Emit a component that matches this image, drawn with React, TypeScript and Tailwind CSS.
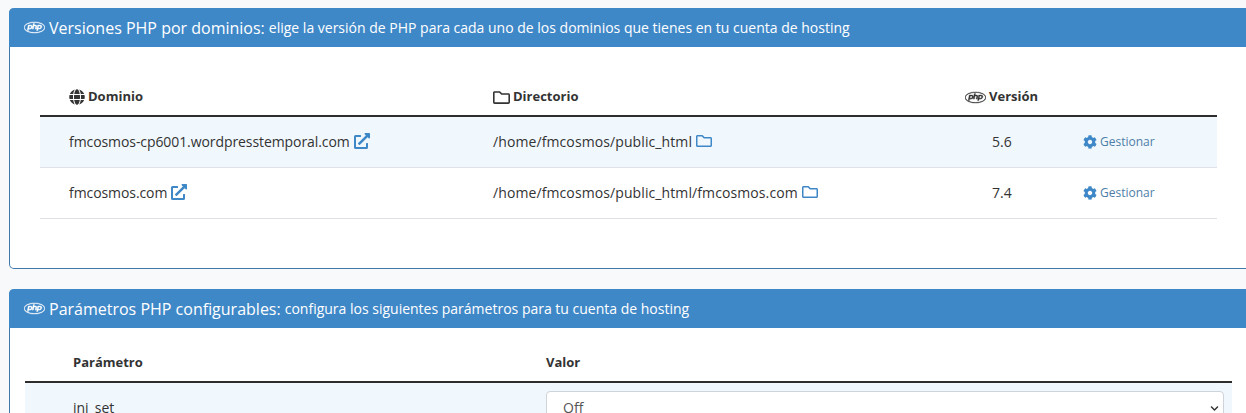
import React from 'react';
import { FaPhp, FaGlobe, FaRegFolder, FaExternalLinkAlt, FaCog, FaChevronDown } from 'react-icons/fa';

const rows = [
  { domain: 'fmcosmos-cp6001.wordpresstemporal.com', dir: '/home/fmcosmos/public_html', version: '5.6', striped: true },
  { domain: 'fmcosmos.com', dir: '/home/fmcosmos/public_html/fmcosmos.com', version: '7.4', striped: false },
];

const CardHeader: React.FC<{ title: string; sub: string }> = ({ title, sub }) => (
  <div className="h-[39px] flex items-center pl-[15px] bg-[#3f88c8] text-white rounded-t-[5px] whitespace-nowrap">
    <FaPhp size={21} stroke="currentColor" strokeWidth={12} className="mr-[4px] shrink-0" />
    <span className="text-[16px] leading-none">{title}</span>
    <span className="text-[14px] leading-none ml-[4px]">{sub}</span>
  </div>
);

const App: React.FC = () => {
  return (
    <div className="h-[413px] overflow-hidden bg-[#f8f9fa] pt-2 pl-[9px] font-['Open_Sans',sans-serif] text-[14px] text-[#333]">
      {/* Versiones */}
      <section className="w-[1260px] h-[261px] bg-white border border-[#3f79ad] border-t-0 rounded-[5px]">
        <div className="-ml-px">
          <CardHeader
            title="Versiones PHP por dominios:"
            sub="elige la versión de PHP para cada uno de los dominios que tienes en tu cuenta de hosting"
          />
        </div>
        <div className="ml-[30px] mt-[31px] w-[1177px]">
          <div className="grid grid-cols-[424px_472px_118px_1fr] h-[39px] items-center font-bold text-[13px] border-b-2 border-[#2d2d2d] pt-px">
            <div className="pl-[29px] flex items-center gap-[3px]"><FaGlobe size={16} />Dominio</div>
            <div className="pl-[29px] flex items-center gap-[3px]"><FaRegFolder size={17} />Directorio</div>
            <div className="pl-[29px] flex items-center gap-[3px]"><FaPhp size={21} stroke="currentColor" strokeWidth={12} />Versión</div>
            <div />
          </div>
          {rows.map((r) => (
            <div
              key={r.domain}
              className={`grid grid-cols-[424px_472px_118px_1fr] h-[51px] items-center border-b border-[#dee2e6] ${r.striped ? 'bg-[#f1f8fd]' : 'bg-white'}`}
            >
              <div className="pl-[29px] pb-[2px] flex items-center tracking-[-0.08px]">
                {r.domain}
                <FaExternalLinkAlt size={16} className="ml-[4px] text-[#3f88c8]" />
              </div>
              <div className="pl-[29px] pb-[2px] flex items-center tracking-[0.1px]">
                {r.dir}
                <FaRegFolder size={16} className="ml-[4px] text-[#3f88c8]" />
              </div>
              <div className="pl-[56px] pb-[2px]">{r.version}</div>
              <div className="pl-[29px] flex items-center text-[12px] text-[#4d7ea8]">
                <FaCog size={14} className="mr-[3px] text-[#3f88c8]" />
                Gestionar
              </div>
            </div>
          ))}
        </div>
      </section>

      {/* Parámetros */}
      <section className="w-[1260px] h-[200px] mt-5 bg-white border-l border-[#3f79ad] rounded-t-[5px]">
        <div className="-ml-px">
          <CardHeader
            title="Parámetros PHP configurables:"
            sub="configura los siguientes parámetros para tu cuenta de hosting"
          />
        </div>
        <div className="ml-[15px] w-[1207px]">
          <div className="grid grid-cols-[521px_1fr] h-[55px] items-center font-bold text-[13px] border-b-2 border-[#2d2d2d] pt-[16px]">
            <div className="pl-[48px]">Parámetro</div>
            <div>Valor</div>
          </div>
          <div className="grid grid-cols-[521px_1fr] h-[60px] bg-[#f1f8fd] pt-[8px]">
            <div className="pl-[48px] pt-[6px]">ini_set</div>
            <div className="relative w-[678px] h-[38px] bg-white border border-[#ced4da] rounded-[4px] pl-[16px] pt-[5px] text-[#555]">
              Off
              <FaChevronDown size={9} className="absolute right-[4px] top-[12px] text-[#333]" />
            </div>
          </div>
        </div>
      </section>
    </div>
  );
};

export default App;
